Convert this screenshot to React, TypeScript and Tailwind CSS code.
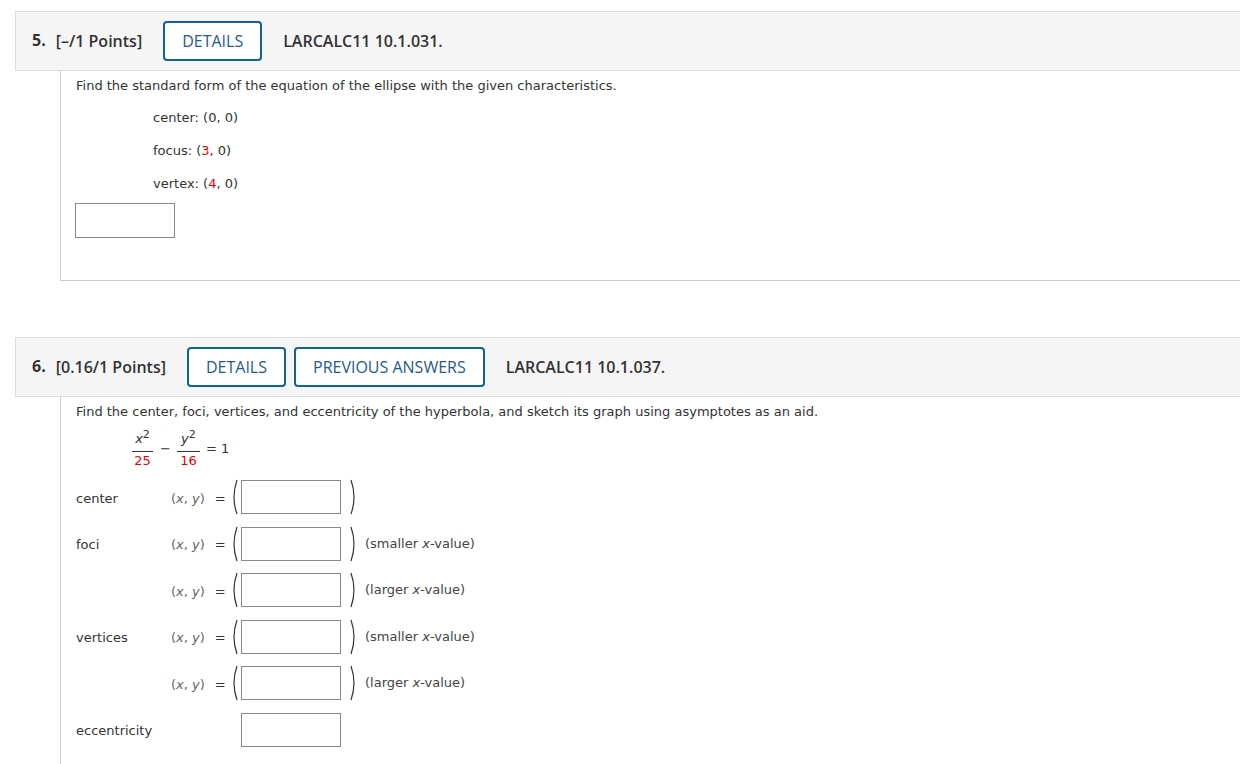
import React from "react";

const RED = "text-[#ee0000]";

function Paren({ side }: { side: "l" | "r" }) {
  return (
    <svg width="8" height="36" viewBox="0 0 8 36" className="shrink-0">
      {side === "l" ? (
        <path d="M6 1 Q0 18 6 35" fill="none" stroke="#333" strokeWidth="1.2" />
      ) : (
        <path d="M2 1 Q8 18 2 35" fill="none" stroke="#333" strokeWidth="1.2" />
      )}
    </svg>
  );
}

function Btn({ children }: { children: React.ReactNode }) {
  return (
    <div className="h-[40px] px-[17px] flex items-center border-2 border-[#10629a] rounded-[4px] bg-white text-[#1d5c8c] text-[16px] font-['Open_Sans',sans-serif]">
      {children}
    </div>
  );
}

function Header({ num, pts, code, prev }: { num: string; pts: string; code: string; prev?: boolean }) {
  return (
    <div className="w-[1300px] h-[60px] bg-[#f5f5f5] border border-[#dcdcdc] flex items-center pl-[16px] font-['Open_Sans',sans-serif] text-[#333]">
      <span className="text-[16px] font-bold mr-[10px] -mt-[2px]">{num}</span>
      <span className="text-[16px] font-semibold mr-[21px]">{pts}</span>
      <div className="flex gap-[8px]">
        <Btn>DETAILS</Btn>
        {prev && <Btn>PREVIOUS ANSWERS</Btn>}
      </div>
      <span className="text-[16px] font-semibold ml-[21px]">{code}</span>
    </div>
  );
}

function Box() {
  return <div className="w-[100px] h-[34px] border border-[#888] bg-white shrink-0" />;
}

function XY() {
  return (
    <span className="text-[#666] w-[60px] shrink-0 pt-[3px]">
      (<i>x</i>, <i>y</i>)<span className="text-[#333] ml-[10px]">=</span>
    </span>
  );
}

function Row({ label, note, plain }: { label?: string; note?: React.ReactNode; plain?: boolean }) {
  return (
    <div className="flex items-center h-[34px]">
      <span className="w-[95px] shrink-0 pt-[3px]">{label}</span>
      {plain ? (
        <div className="ml-[70px]"><Box /></div>
      ) : (
        <>
          <XY />
          <Paren side="l" />
          <span className="ml-[2px]"><Box /></span>
          <span className="ml-[8px]"><Paren side="r" /></span>
          <span className="ml-[8px] text-[#444]">{note}</span>
        </>
      )}
    </div>
  );
}

function Frac({ top, bottom, w }: { top: React.ReactNode; bottom: string; w: string }) {
  return (
    <div className={`flex flex-col items-center ${w}`}>
      <span className="leading-[16px]">{top}</span>
      <span className="w-full h-px bg-[#333] mt-[4px]" />
      <span className={`${RED} leading-[16px] mt-px`}>{bottom}</span>
    </div>
  );
}

export default function App() {
  return (
    <div className="w-[1240px] h-[764px] overflow-hidden bg-white font-['DejaVu_Sans',Verdana,sans-serif] text-[13px] text-[#333]">
      <div className="pt-[11px] pl-[15px]">
        <Header num="5." pts="[–/1 Points]" code="LARCALC11 10.1.031." />
        <div className="ml-[45px] h-[210px] border-l border-b border-[#ccc] pl-[15px] pt-[7px] leading-[16px]">
          <p>Find the standard form of the equation of the ellipse with the given characteristics.</p>
          <div className="pl-[77px] mt-[16px] flex flex-col gap-[17px]">
            <p>center: (0, 0)</p>
            <p>focus: (<span className={RED}>3</span>, 0)</p>
            <p>vertex: (<span className={RED}>4</span>, 0)</p>
          </div>
          <div className="mt-[11px] -ml-px w-[100px] h-[35px] border border-[#888]" />
        </div>

        <div className="mt-[56px]">
          <Header num="6." pts="[0.16/1 Points]" code="LARCALC11 10.1.037." prev />
        </div>
        <div className="ml-[45px] h-[400px] border-l border-[#ccc] pl-[15px] pt-[7px] leading-[16px]">
          <p>Find the center, foci, vertices, and eccentricity of the hyperbola, and sketch its graph using asymptotes as an aid.</p>
          <div className="pl-[56px] mt-[11px] flex items-center">
            <Frac w="w-[21px]" top={<><i>x</i><sup className="text-[11px] -top-[5px]">2</sup></>} bottom="25" />
            <span className="ml-[7px] mr-[6px] -mt-[2px]">−</span>
            <Frac w="w-[23px]" top={<><i>y</i><sup className="text-[11px] -top-[5px]">2</sup></>} bottom="16" />
            <span className="ml-[6px] -mt-[2px]">= 1</span>
          </div>
          <div className="mt-[11px] flex flex-col gap-[12.6px]">
            <Row label="center" />
            <Row label="foci" note={<>(smaller <i>x</i>-value)</>} />
            <Row note={<>(larger <i>x</i>-value)</>} />
            <Row label="vertices" note={<>(smaller <i>x</i>-value)</>} />
            <Row note={<>(larger <i>x</i>-value)</>} />
            <Row label="eccentricity" plain />
          </div>
        </div>
      </div>
    </div>
  );
}
